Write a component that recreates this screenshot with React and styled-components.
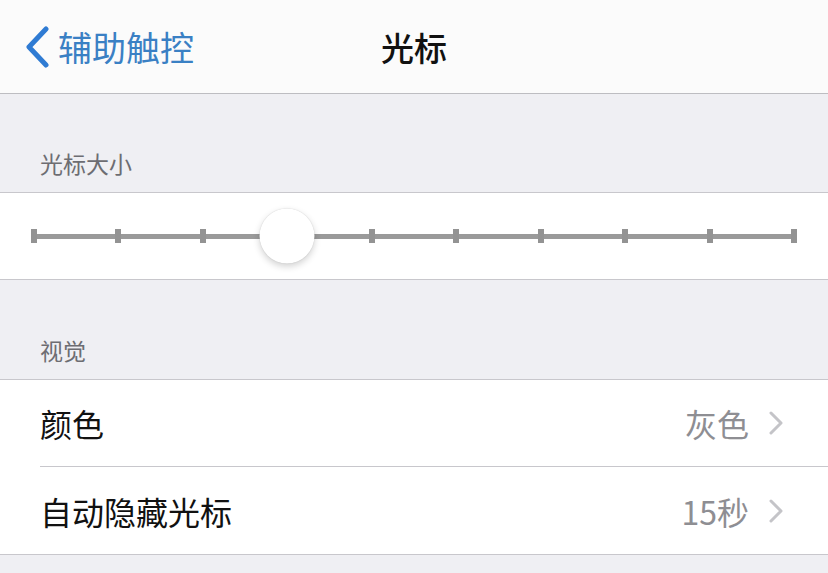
import React from 'react';
import styled, { createGlobalStyle } from 'styled-components';

const GlobalStyle = createGlobalStyle`
  body {
    margin: 0;
    background: #efeff3;
    font-family: "Noto Sans CJK SC", "Noto Sans", sans-serif;
  }
`;

const Page = styled.div`
  width: 828px;
  height: 573px;
  overflow: hidden;
  background: #efeff3;
`;

const NavBar = styled.div`
  height: 93px;
  background: #fbfbfb;
  border-bottom: 1px solid #bdbdc1;
  display: grid;
  grid-template-columns: 1fr auto 1fr;
  align-items: center;
`;

const BackButton = styled.div`
  display: flex;
  align-items: center;
  gap: 8px;
  padding-left: 24px;
  color: #3a80c4;
  font-size: 34px;
`;

const Title = styled.div`
  font-size: 33px;
  font-weight: 500;
  color: #111;
`;

const SectionHeader = styled.div`
  height: ${(p) => p.$height || 98}px;
  box-sizing: border-box;
  display: flex;
  align-items: flex-end;
  padding: 0 0 12px 40px;
  font-size: 23px;
  color: #6d6d72;
`;

const Group = styled.div`
  background: #fff;
  border-top: 1px solid #c8c7cc;
  border-bottom: 1px solid #c8c7cc;
`;

const SliderCell = styled.div`
  height: 86px;
  display: flex;
  align-items: center;
  padding: 0 31px;
`;

const Track = styled.div`
  position: relative;
  flex: 1;
  height: 14px;
  display: flex;
  justify-content: space-between;
  align-items: center;

  &::before {
    content: "";
    position: absolute;
    left: 3px;
    right: 3px;
    top: 5px;
    height: 5px;
    background: #9a9a9a;
  }
`;

const Tick = styled.div`
  position: relative;
  width: 6px;
  height: 14px;
  background: #939393;
`;

const Thumb = styled.div`
  position: absolute;
  top: 50%;
  width: 55px;
  height: 55px;
  border-radius: 50%;
  background: #fff;
  transform: translate(-50%, -50%);
  box-shadow: 0 3px 7px rgba(0, 0, 0, 0.18), 0 0 1px rgba(0, 0, 0, 0.2);
`;

const Row = styled.div`
  height: ${(p) => p.$height || 86}px;
  display: flex;
  align-items: center;
  margin-left: 40px;
  padding-right: 45px;
  border-top: ${(p) => (p.$first ? 'none' : '1px solid #c8c7cc')};
`;

const Label = styled.div`
  flex: 1;
  font-size: 32px;
  color: #111;
`;

const Value = styled.div`
  font-size: 32px;
  color: #8e8e93;
  margin-right: 20px;
`;

const BackChevron = () => (
  <svg width="26" height="42" viewBox="0 0 26 42">
    <path d="M22 3 L5 21 L22 39" fill="none" stroke="#2f7bd3" strokeWidth="5" strokeLinecap="round" strokeLinejoin="round" />
  </svg>
);

const Chevron = () => (
  <svg width="14" height="24" viewBox="0 0 14 24">
    <path d="M2 2 L12 12 L2 22" fill="none" stroke="#c4c4c8" strokeWidth="3" strokeLinecap="round" strokeLinejoin="round" />
  </svg>
);

const steps = 10;
const value = 3;

const App = () => (
  <Page>
    <GlobalStyle />
    <NavBar>
      <BackButton>
        <BackChevron />
        辅助触控
      </BackButton>
      <Title>光标</Title>
      <div />
    </NavBar>
    <SectionHeader>光标大小</SectionHeader>
    <Group>
      <SliderCell>
        <Track>
          {Array.from({ length: steps }).map((_, i) => (
            <Tick key={i} />
          ))}
          <Thumb style={{ left: `calc(3px + (100% - 6px) * ${value / (steps - 1)})` }} />
        </Track>
      </SliderCell>
    </Group>
    <SectionHeader $height={99}>视觉</SectionHeader>
    <Group>
      <Row $first>
        <Label>颜色</Label>
        <Value>灰色</Value>
        <Chevron />
      </Row>
      <Row $height={87}>
        <Label>自动隐藏光标</Label>
        <Value>15秒</Value>
        <Chevron />
      </Row>
    </Group>
  </Page>
);

export default App;
